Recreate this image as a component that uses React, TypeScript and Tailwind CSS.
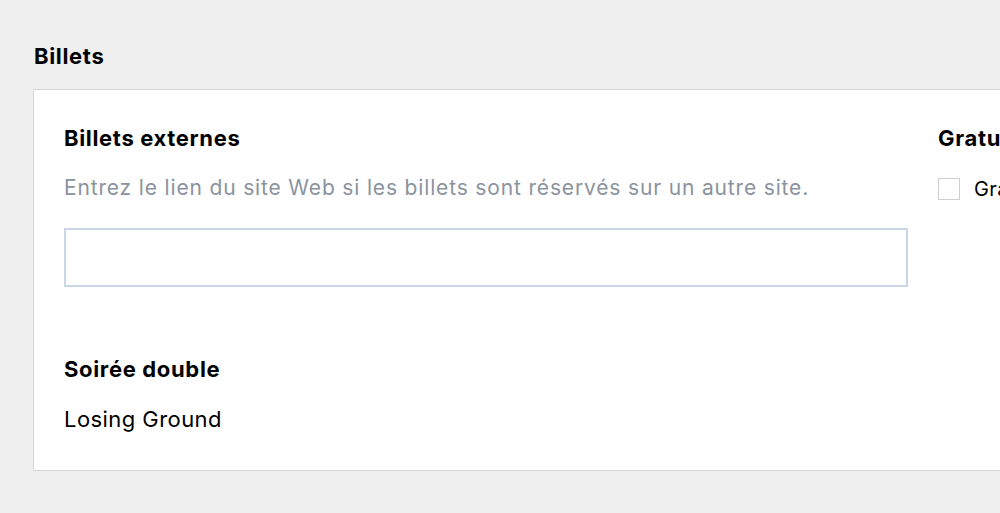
export default function App() {
  return (
    <div className="min-h-screen w-[1000px] h-[513px] overflow-hidden bg-[#efefef] pl-[33px] pt-[43px] font-['Inter',sans-serif] text-black">
      <h2 className="pl-px text-[22px] font-bold leading-[26px] tracking-[0.03em]">Billets</h2>
      <div className="mt-[20px] flex w-[1200px] gap-[30px] border border-[#d6d6d6] bg-white pb-[38px] pl-[30px] pt-[35px]">
        <div className="w-[844px] shrink-0">
          <h3 className="text-[22px] font-bold leading-[26px] tracking-[0.03em]">Billets externes</h3>
          <p className="mt-[24px] text-[21px] leading-[26px] tracking-[0.04em] text-[#8a939e]">
            Entrez le lien du site Web si les billets sont réservés sur un autre site.
          </p>
          <input
            type="text"
            className="mt-[27px] block h-[59px] w-full border-2 border-[#c9d6e6] px-3 text-[18px] outline-none"
          />
          <h3 className="mt-[69px] text-[22px] font-bold leading-[26px] tracking-[0.03em]">Soirée double</h3>
          <p className="mt-[24px] text-[22px] leading-[26px] tracking-[0.02em]">Losing Ground</p>
        </div>
        <div className="shrink-0">
          <h3 className="text-[22px] font-bold leading-[26px] tracking-[0.03em]">Gratuit</h3>
          <label className="mt-[23px] flex items-center gap-[14px] text-[20px] tracking-[0.02em]">
            <span className="block h-[22px] w-[22px] border border-[#cfcfcf] bg-white" />
            Gratuit
          </label>
        </div>
      </div>
    </div>
  );
}
